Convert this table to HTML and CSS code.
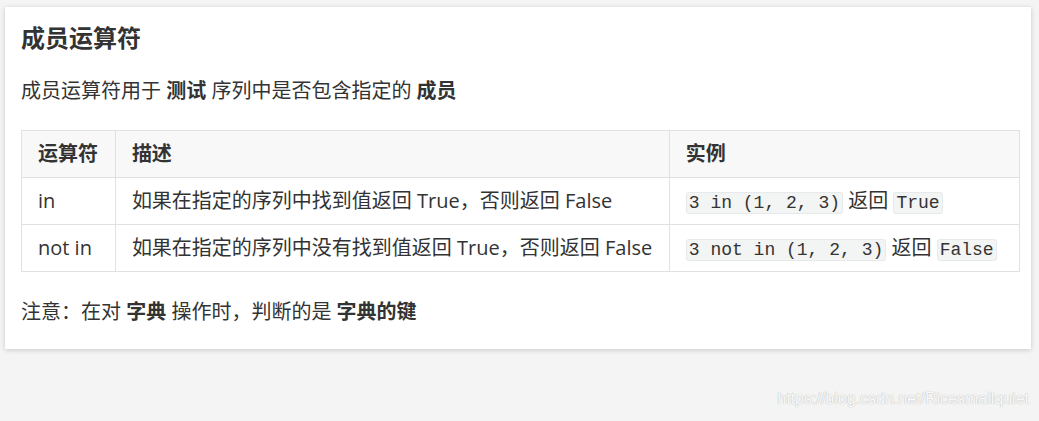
FILE: index.html
```html
<!DOCTYPE html>
<html lang="zh">
<head>
<meta charset="utf-8">
<title>成员运算符</title>
<link rel="stylesheet" href="styles.css">
</head>
<body>
<div class="page">
  <article class="card">
    <h3 class="title">成员运算符</h3>
    <p class="text">成员运算符用于 <strong>测试</strong> 序列中是否包含指定的 <strong>成员</strong></p>
    <table class="ops">
      <thead>
        <tr><th class="c-op">运算符</th><th class="c-desc">描述</th><th class="c-ex">实例</th></tr>
      </thead>
      <tbody>
        <tr>
          <td>in</td>
          <td>如果在指定的序列中找到值返回 True，否则返回 False</td>
          <td><code>3 in (1, 2, 3)</code> 返回 <code>True</code></td>
        </tr>
        <tr>
          <td>not in</td>
          <td>如果在指定的序列中没有找到值返回 True，否则返回 False</td>
          <td><code>3 not in (1, 2, 3)</code> 返回 <code>False</code></td>
        </tr>
      </tbody>
    </table>
    <p class="text note">注意：在对 <strong>字典</strong> 操作时，判断的是 <strong>字典的键</strong></p>
  </article>
  <div class="footer"><span class="watermark">https://blog.csdn.net/Ricesmallquiet</span></div>
</div>
</body>
</html>
```

FILE: styles.css
```css
html, body {
  margin: 0;
  padding: 0;
  background: #f4f4f4;
}

body {
  font-family: "Open Sans", "Noto Sans CJK SC", sans-serif;
  color: #333;
  font-size: 20px;
}

.page {
  padding: 7px 8px 0 5px;
  display: flex;
  flex-direction: column;
}

.card {
  background: #fff;
  padding: 14px 11px 21px 16px;
  box-shadow: 0 1px 5px rgba(0, 0, 0, 0.18);
}

.title {
  margin: 0;
  font-size: 24px;
  line-height: 34px;
  font-weight: bold;
  color: #333;
}

.text {
  margin: 20px 0 0 0;
  line-height: 32px;
}

.text strong {
  font-weight: bold;
}

.ops {
  margin-top: 23px;
  border-collapse: collapse;
  white-space: nowrap;
}

.ops th,
.ops td {
  border: 1px solid #dfe2e5;
  padding: 0 16px;
  height: 47px;
  box-sizing: border-box;
  line-height: 30px;
  text-align: left;
  vertical-align: middle;
}

.ops .c-op { width: 94px; }
.ops .c-desc { width: 554px; }
.ops .c-ex { width: 351px; }

.ops th {
  background: #f8f8f8;
  font-weight: bold;
}

.ops td {
  background: #fff;
}

code {
  font-family: "Liberation Mono", monospace;
  font-size: 18px;
  line-height: 22px;
  background: #f3f4f4;
  border: 1px solid #e7eaed;
  border-radius: 3px;
  padding: 0 2px;
}

.note {
  margin-top: 24px;
}

.footer {
  display: flex;
  justify-content: flex-end;
  padding: 40px 2px 0 0;
}

.watermark {
  font-family: "Liberation Sans", sans-serif;
  font-size: 16px;
  line-height: 20px;
  color: #fafafa;
  text-shadow: 0 0 1px #b8b8b8, 0 0 1px #c8c8c8;
}
```
